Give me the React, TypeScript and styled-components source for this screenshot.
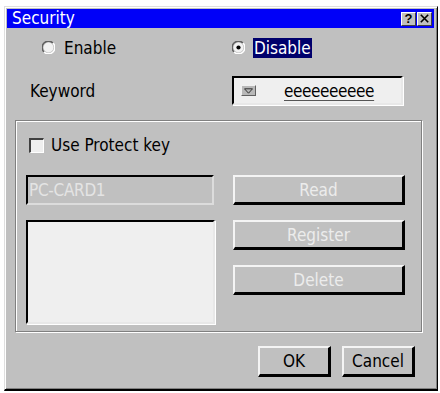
import React from "react";
import styled, { createGlobalStyle } from "styled-components";

const Global = createGlobalStyle`
  html, body { margin: 0; padding: 0; background: #ffffff; }
  body { font-family: "Liberation Sans Narrow", "DejaVu Sans Condensed", "Liberation Sans", sans-serif; }
`;

const FONT = `"Liberation Sans Narrow", "DejaVu Sans Condensed", "Liberation Sans", sans-serif`;

const Window = styled.div`
  margin: 6px 0 0 4px;
  width: 434px;
  height: 385px;
  box-sizing: border-box;
  background: #c0c0c0;
  border-top: 1px solid #dfdfdf;
  border-left: 1px solid #dfdfdf;
  border-right: 1px solid #000;
  border-bottom: 2px solid #000;
  box-shadow: inset 1px 1px 0 #ffffff, inset -1px -1px 0 #808080;
  padding: 2px 3px 0 2px;
  display: flex;
  flex-direction: column;
  font-family: ${FONT};
  font-size: 17px;
  color: #000;
`;

const TitleBar = styled.div`
  height: 19px;
  background: #0000f8;
  display: flex;
  align-items: center;
  padding: 0 2px 0 5px;
`;

const Title = styled.span`
  color: #fff;
  font-size: 17px;
  flex: 1;
  line-height: 19px;
`;

const TitleButton = styled.div`
  width: 15px;
  height: 14px;
  margin-left: 1px;
  background: #c0c0c0;
  box-sizing: border-box;
  border-top: 1px solid #fff;
  border-left: 1px solid #fff;
  border-right: 1px solid #404040;
  border-bottom: 1px solid #404040;
  display: flex;
  align-items: center;
  justify-content: center;
  font-family: "Liberation Sans", sans-serif;
  font-weight: bold;
  font-size: 13px;
  line-height: 12px;
  color: #000;
`;

const RadioRow = styled.div`
  display: flex;
  margin-top: 9px;
  height: 21px;
  align-items: center;
`;

const RadioItem = styled.div<{ $left: number; $width: number }>`
  margin-left: ${(p) => p.$left}px;
  width: ${(p) => p.$width}px;
  display: flex;
  align-items: center;
`;

const RadioLabel = styled.span<{ $selected?: boolean }>`
  margin-left: ${(p) => (p.$selected ? 8 : 8)}px;
  padding: 0 1px;
  line-height: 20px;
  background: ${(p) => (p.$selected ? "#00006c" : "transparent")};
  color: ${(p) => (p.$selected ? "#fff" : "#000")};
`;

const KeywordRow = styled.div`
  display: flex;
  align-items: center;
  margin-top: 18px;
  height: 29px;
`;

const KeywordLabel = styled.span`
  margin-left: 23px;
  width: 202px;
`;

const SunkenField = styled.div<{ $bg: string; $w: number; $h: number }>`
  width: ${(p) => p.$w}px;
  height: ${(p) => p.$h}px;
  box-sizing: border-box;
  background: ${(p) => p.$bg};
  border-top: 2px solid #000;
  border-left: 2px solid #000;
  border-right: 2px solid #e8e8e8;
  border-bottom: 2px solid #e8e8e8;
  box-shadow: 1px 1px 0 #ffffff;
`;

const KeywordField = styled(SunkenField)`
  display: flex;
  align-items: center;
  padding-left: 7px;
`;

const DropButton = styled.div`
  width: 15px;
  height: 11px;
  box-sizing: border-box;
  background: #b8b8b8;
  border-top: 1px solid #f0f0f0;
  border-left: 1px solid #f0f0f0;
  border-right: 1px solid #606060;
  border-bottom: 1px solid #606060;
  display: flex;
  align-items: center;
  justify-content: center;
`;

const KeywordText = styled.span`
  margin-left: 28px;
  text-decoration: underline;
  text-decoration-color: #555;
  text-underline-offset: 3px;
  letter-spacing: -0.4px;
`;

const Group = styled.div`
  margin: 15px 0 0 8px;
  width: 407px;
  height: 212px;
  box-sizing: border-box;
  border: 1px solid #808080;
  box-shadow: inset 1px 1px 0 #fff, 1px 1px 0 #fff;
  padding: 16px 0 0 10px;
  display: flex;
  flex-direction: column;
`;

const CheckRow = styled.div`
  display: flex;
  align-items: center;
  margin-left: 3px;
  height: 16px;
`;

const CheckBox = styled.div`
  width: 15px;
  height: 15px;
  box-sizing: border-box;
  background: #efefef;
  border-top: 2px solid #404040;
  border-left: 2px solid #404040;
  border-right: 1px solid #fff;
  border-bottom: 1px solid #fff;
`;

const CheckLabel = styled.span`
  margin-left: 7px;
`;

const Columns = styled.div`
  display: flex;
  margin-top: 22px;
  gap: 18px;
`;

const Column = styled.div<{ $gap: number }>`
  display: flex;
  flex-direction: column;
  gap: ${(p) => p.$gap}px;
`;

const CardField = styled(SunkenField)`
  display: flex;
  align-items: center;
  padding-left: 1px;
  color: #e4e4e4;
  border-right-color: #dcdcdc;
  border-bottom-color: #dcdcdc;
  box-shadow: none;
  letter-spacing: -0.3px;
`;

const Button = styled.div<{ $w: number; $h: number; $disabled?: boolean }>`
  width: ${(p) => p.$w}px;
  height: ${(p) => p.$h}px;
  box-sizing: border-box;
  background: #c0c0c0;
  border-top: 2px solid #f4f4f4;
  border-left: 2px solid #f4f4f4;
  border-right: 3px solid #000;
  border-bottom: 3px solid #000;
  display: flex;
  align-items: center;
  justify-content: center;
  color: ${(p) => (p.$disabled ? "#ececec" : "#000")};
`;

const Footer = styled.div`
  display: flex;
  justify-content: flex-end;
  gap: 11px;
  margin-top: 14px;
  padding-right: 19px;
`;

const Radio: React.FC<{ checked?: boolean }> = ({ checked }) => (
  <svg width="13" height="13" viewBox="0 0 13 13">
    <path d="M11 2 A6.3 6.3 0 0 0 2 11" stroke="#606060" strokeWidth="1.5" fill="none" />
    <path d="M2 11 A6.3 6.3 0 0 0 11 2" stroke="#ffffff" strokeWidth="1.5" fill="none" />
    <circle cx="6.5" cy="6.5" r="4.9" fill="#f2f2f2" />
    {checked && <circle cx="6.5" cy="6.5" r="2.1" fill="#000" />}
  </svg>
);

export default function App() {
  return (
    <>
      <Global />
      <Window>
        <TitleBar>
          <Title>Security</Title>
          <TitleButton>?</TitleButton>
          <TitleButton>
            <svg width="9" height="9" viewBox="0 0 9 9">
              <path d="M0.8 0.8 L8.2 8.2 M8.2 0.8 L0.8 8.2" stroke="#000" strokeWidth="1.6" />
            </svg>
          </TitleButton>
        </TitleBar>

        <RadioRow>
          <RadioItem $left={35} $width={190}>
            <Radio />
            <RadioLabel>Enable</RadioLabel>
          </RadioItem>
          <RadioItem $left={0} $width={120}>
            <Radio checked />
            <RadioLabel $selected>Disable</RadioLabel>
          </RadioItem>
        </RadioRow>

        <KeywordRow>
          <KeywordLabel>Keyword</KeywordLabel>
          <KeywordField $bg="#efefef" $w={171} $h={29}>
            <DropButton>
              <svg width="9" height="6" viewBox="0 0 9 6">
                <path d="M0.5 0.8 H8.5 L4.5 5.2 Z" fill="none" stroke="#303030" strokeWidth="1" />
              </svg>
            </DropButton>
            <KeywordText>eeeeeeeeee</KeywordText>
          </KeywordField>
        </KeywordRow>

        <Group>
          <CheckRow>
            <CheckBox />
            <CheckLabel>Use Protect key</CheckLabel>
          </CheckRow>
          <Columns>
            <Column $gap={15}>
              <CardField $bg="#c0c0c0" $w={188} $h={30}>PC-CARD1</CardField>
              <SunkenField $bg="#efefef" $w={189} $h={104} />
            </Column>
            <Column $gap={15}>
              <Button $w={172} $h={30} $disabled>Read</Button>
              <Button $w={172} $h={30} $disabled>Register</Button>
              <Button $w={172} $h={30} $disabled>Delete</Button>
            </Column>
          </Columns>
        </Group>

        <Footer>
          <Button $w={73} $h={31}>OK</Button>
          <Button $w={73} $h={31}>Cancel</Button>
        </Footer>
      </Window>
    </>
  );
}
